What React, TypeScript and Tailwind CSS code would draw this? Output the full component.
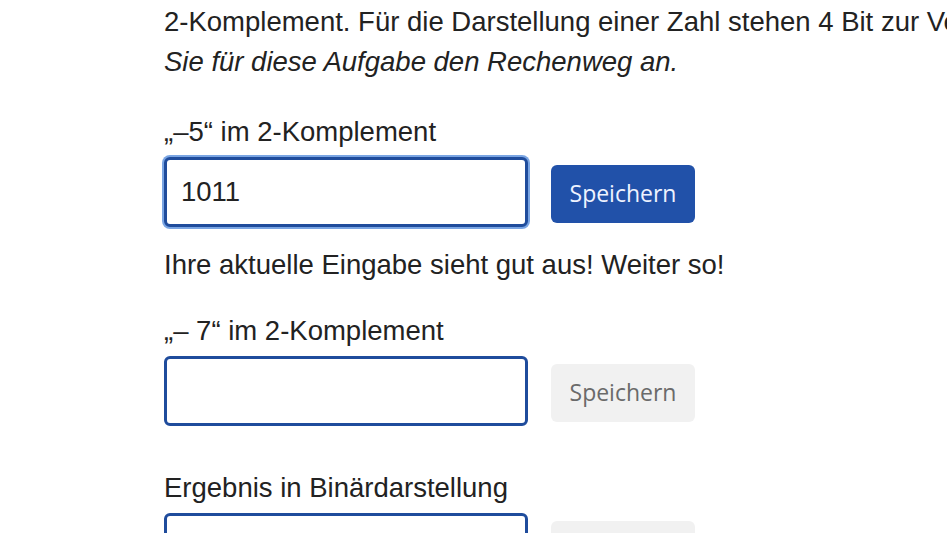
import React from "react";

function Field({
  label,
  value,
  active,
  focused,
  mt,
}: {
  label: string;
  value?: string;
  active?: boolean;
  focused?: boolean;
  mt: string;
}) {
  return (
    <div className={mt}>
      <div className="h-[40px] leading-[40px] whitespace-nowrap">{label}</div>
      <div className="mt-[5px] flex items-center gap-[23px]">
        <div
          className={
            "w-[364px] h-[70px] rounded-[6px] border-[3px] border-[#1f4c9c] bg-white flex items-center pl-[14px] " +
            (focused ? "shadow-[0_0_0_2px_#7aa5e3]" : "")
          }
        >
          <span className="text-[27.5px] text-[#222]">{value}</span>
        </div>
        <button
          className={
            "w-[144px] h-[58px] rounded-[6px] text-[23px] mt-[3px] " +
            (active
              ? "bg-[#2151a9] text-[#eef3ff]"
              : "bg-[#f1f1f1] text-[#6a6a6a]")
          }
          style={{ fontFamily: '"Open Sans", "Noto Sans", sans-serif' }}
        >
          Speichern
        </button>
      </div>
    </div>
  );
}

export default function App() {
  return (
    <div
      className="w-[947px] h-[533px] overflow-hidden bg-white text-[#222] text-[27.5px]"
      style={{ fontFamily: '"Liberation Sans", Arial, sans-serif' }}
    >
      <div className="pl-[164px] pt-[2px]">
        <div className="h-[40px] leading-[40px] whitespace-nowrap">
          2-Komplement. Für die Darstellung einer Zahl stehen 4 Bit zur Verfügung. Geben
        </div>
        <div className="h-[40px] leading-[40px] whitespace-nowrap italic">
          Sie für diese Aufgabe den Rechenweg an.
        </div>
        <Field label="„–5“ im 2-Komplement" value="1011" active focused mt="mt-[30px]" />
        <div className="mt-[18px] h-[40px] leading-[40px] whitespace-nowrap">
          Ihre aktuelle Eingabe sieht gut aus! Weiter so!
        </div>
        <Field label="„– 7“ im 2-Komplement" mt="mt-[26px]" />
        <Field label="Ergebnis in Binärdarstellung" mt="mt-[42px]" />
      </div>
    </div>
  );
}
